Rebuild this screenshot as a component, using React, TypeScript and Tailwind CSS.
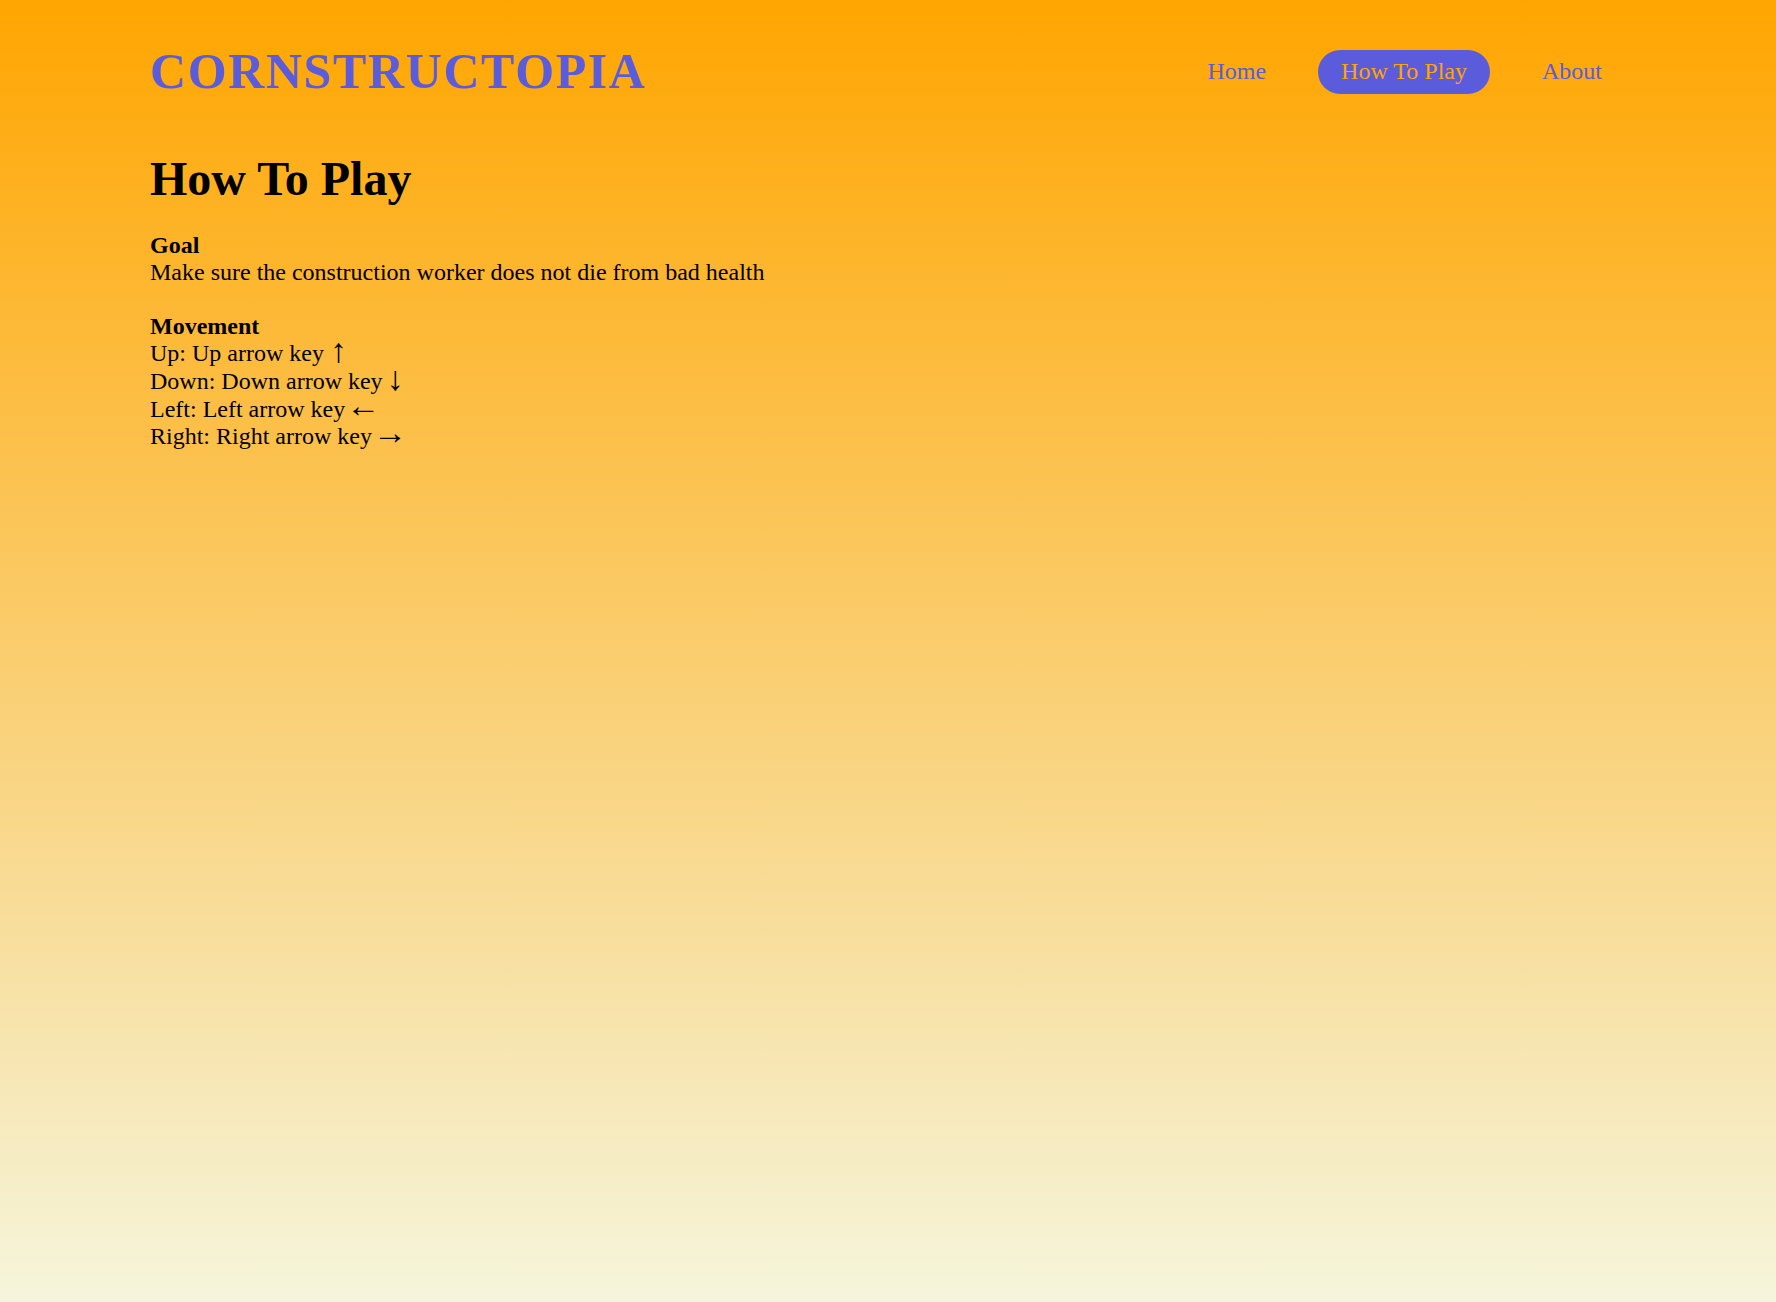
function Arrow({ ch, cls }: { ch: string; cls: string }) {
  return <span className={"relative text-[34px] leading-[0] " + cls}>{ch}</span>;
}

export default function App() {
  const serif = { fontFamily: '"Liberation Serif", "Times New Roman", serif' };
  return (
    <div
      className="min-h-screen w-full bg-[linear-gradient(to_bottom,#ffa500,#f5f5dc)] text-black"
      style={serif}
    >
      <div className="pl-[150px] pr-[152px]">
        <header className="flex items-center justify-between pt-[43px]">
          <div className="text-[50px] font-bold leading-[1.15] tracking-[1.6px] text-[#5b5cdb]">
            CORNSTRUCTOPIA
          </div>
          <nav className="flex items-center gap-[30px] text-[24px] leading-[1.15]">
            <a className="px-[22px] py-2 text-[#5b5cdb]">Home</a>
            <a className="rounded-full bg-[#5b5cdb] px-[23px] py-2 text-[#ffa500]">How To Play</a>
            <a className="px-[22px] py-2 text-[#5b5cdb]">About</a>
          </nav>
        </header>
        <main className="text-[24px] leading-[1.15]">
          <h1 className="mt-[50px] text-[48px] font-bold leading-[1.15]">How To Play</h1>
          <p className="mt-[26px]">
            <b>Goal</b>
            <br />
            Make sure the construction worker does not die from bad health
          </p>
          <p className="mt-[26px]">
            <b>Movement</b>
            <br />
            Up: Up arrow key <Arrow ch="↑" cls="top-[1px] ml-[0px]" />
            <br />
            Down: Down arrow key <Arrow ch="↓" cls="top-[1px] ml-[-2px]" />
            <br />
            Left: Left arrow key <Arrow ch="←" cls="top-[0px] ml-[-5px]" />
            <br />
            Right: Right arrow key <Arrow ch="→" cls="top-[0px] ml-[-5px]" />
          </p>
        </main>
      </div>
    </div>
  );
}
